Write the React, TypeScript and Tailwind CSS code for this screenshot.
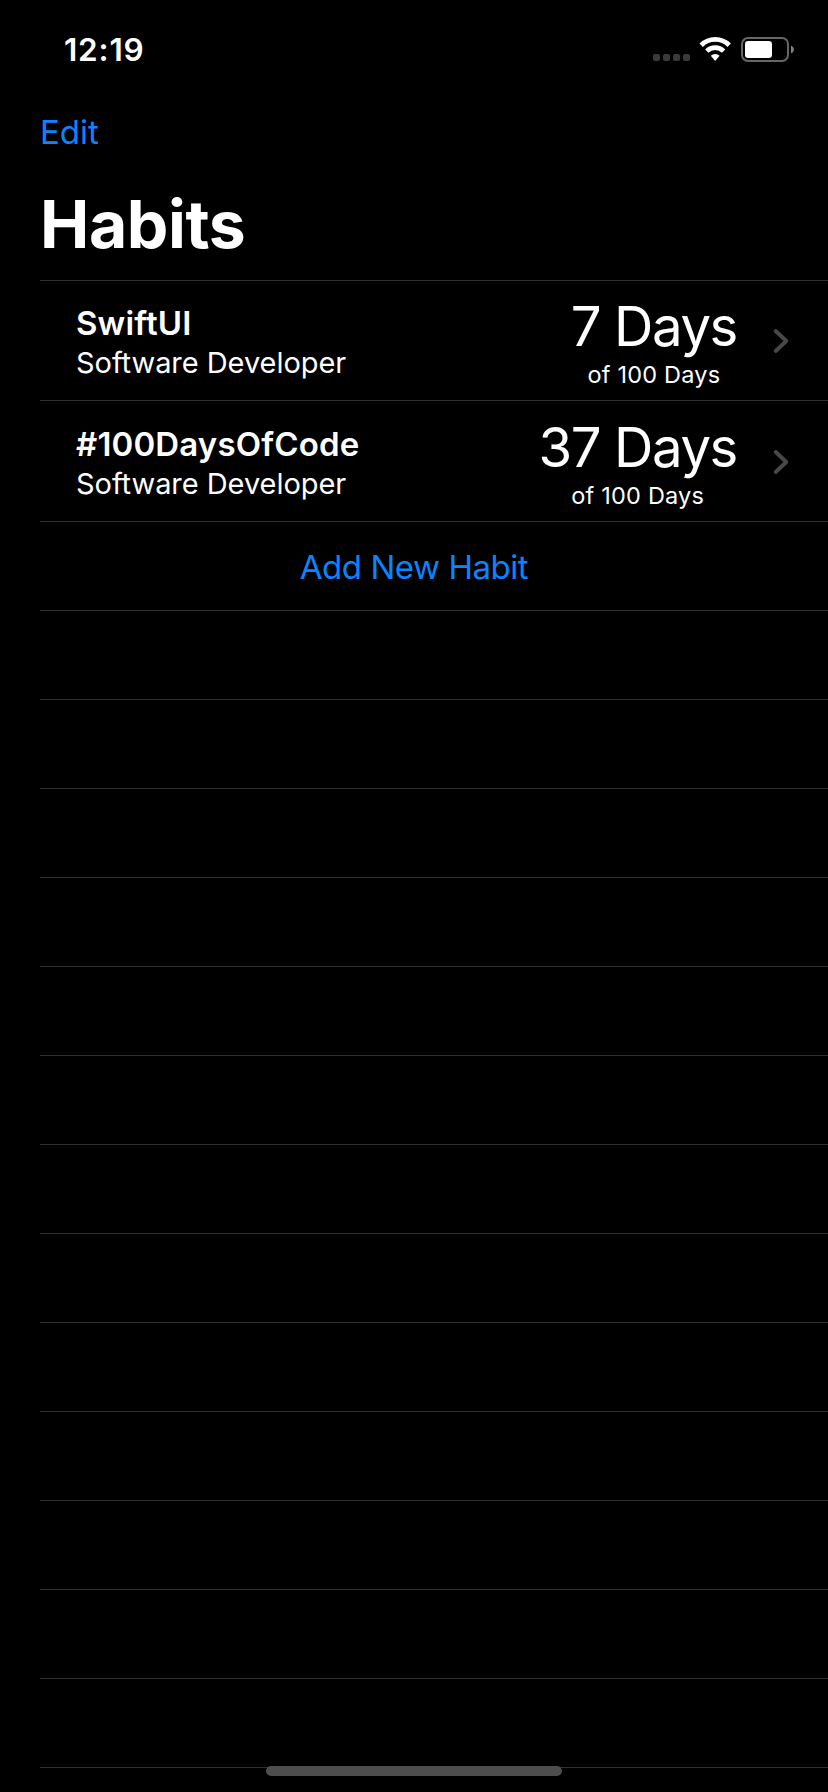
const habits = [
  { name: 'SwiftUI', role: 'Software Developer', days: '7 Days', goal: 'of 100 Days', pad: 'h-[120px] pt-[15px]' },
  { name: '#100DaysOfCode', role: 'Software Developer', days: '37 Days', goal: 'of 100 Days', pad: 'h-[121px] pt-4' },
];

function StatusIcons() {
  return (
    <div className="flex items-start">
      <div className="mt-[17px] flex gap-[3px]">
        {[0, 1, 2, 3].map((i) => (
          <span key={i} className="h-[7px] w-[7px] rounded-[2px] bg-[#3a3a3a]" />
        ))}
      </div>
      <svg className="ml-[9px]" width="33" height="25" viewBox="0 0 33 25" fill="none">
        <path d="M2.2 8.2a19.8 19.8 0 0 1 28 0" stroke="#fff" strokeWidth="4.8" />
        <path d="M7.8 14.1a12 12 0 0 1 16.8 0" stroke="#fff" strokeWidth="4.7" />
        <path d="M11.8 18.7a6.3 6.3 0 0 1 8.8 0L16.2 24z" fill="#fff" />
      </svg>
      <svg className="ml-[8px]" width="54" height="26" viewBox="0 0 54 26" fill="none">
        <rect x="2" y="1" width="46" height="23" rx="6" stroke="#666" strokeWidth="2" />
        <rect x="5" y="4" width="27" height="17" rx="3.2" fill="#fff" />
        <path d="M51 8.5q3 1.5 3 4t-3 4z" fill="#808080" />
      </svg>
    </div>
  );
}

export default function App() {
  return (
    <div className="relative flex h-[1792px] w-[828px] flex-col overflow-hidden bg-black font-['Inter',sans-serif] text-white">
      <div className="flex h-[110px] justify-between pt-[30px] pl-16 pr-[34px]">
        <span className="text-[31.5px] leading-10 font-semibold tracking-[0.8px]">12:19</span>
        <div className="pt-[7px]"><StatusIcons /></div>
      </div>
      <div className="flex h-[74px] pl-10">
        <button className="h-11 text-[33px] leading-11 text-[#0a84ff]">Edit</button>
      </div>
      <h1 className="h-24 pl-10 text-[66px] leading-20 font-bold tracking-[-0.4px]">Habits</h1>
      <ul className="ml-10 flex flex-col border-t border-[#303032]">
        {habits.map((h) => (
          <li key={h.name} className={`flex border-b border-[#303032] pl-9 pr-[38px] ${h.pad}`}>
            <div className="flex flex-1 flex-col pt-2 whitespace-nowrap">
              <span className="text-[33px] leading-[39px] font-semibold tracking-[0.15px]">{h.name}</span>
              <span className="text-[29px] leading-10 tracking-[-0.05px]">{h.role}</span>
            </div>
            <div className="flex flex-col items-center whitespace-nowrap">
              <span className="text-[54.5px] leading-[60px] tracking-[-1.4px]">{h.days}</span>
              <span className="mt-1 text-[23.5px] leading-[30px] tracking-[0.2px]">{h.goal}</span>
            </div>
            <svg className="mt-[32px] ml-[35px]" width="18" height="26" viewBox="0 0 18 26" fill="none">
              <path d="M3.7 3L14.3 13L3.7 23" stroke="#48484a" strokeWidth="3.9" strokeLinecap="round" strokeLinejoin="round" />
            </svg>
          </li>
        ))}
        <li className="flex h-[89px] justify-center border-b border-[#303032] pr-10 pt-[25px]">
          <button className="h-10 text-[33px] leading-10 tracking-[-0.45px] text-[#0a84ff]">Add New Habit</button>
        </li>
        {Array.from({ length: 13 }, (_, i) => (
          <li key={i} className="h-[89px] border-b border-[#303032]" />
        ))}
      </ul>
      <div className="absolute top-[1766px] left-[266px] h-[10px] w-[296px] rounded-full bg-[#4d4d4d]" />
    </div>
  );
}
